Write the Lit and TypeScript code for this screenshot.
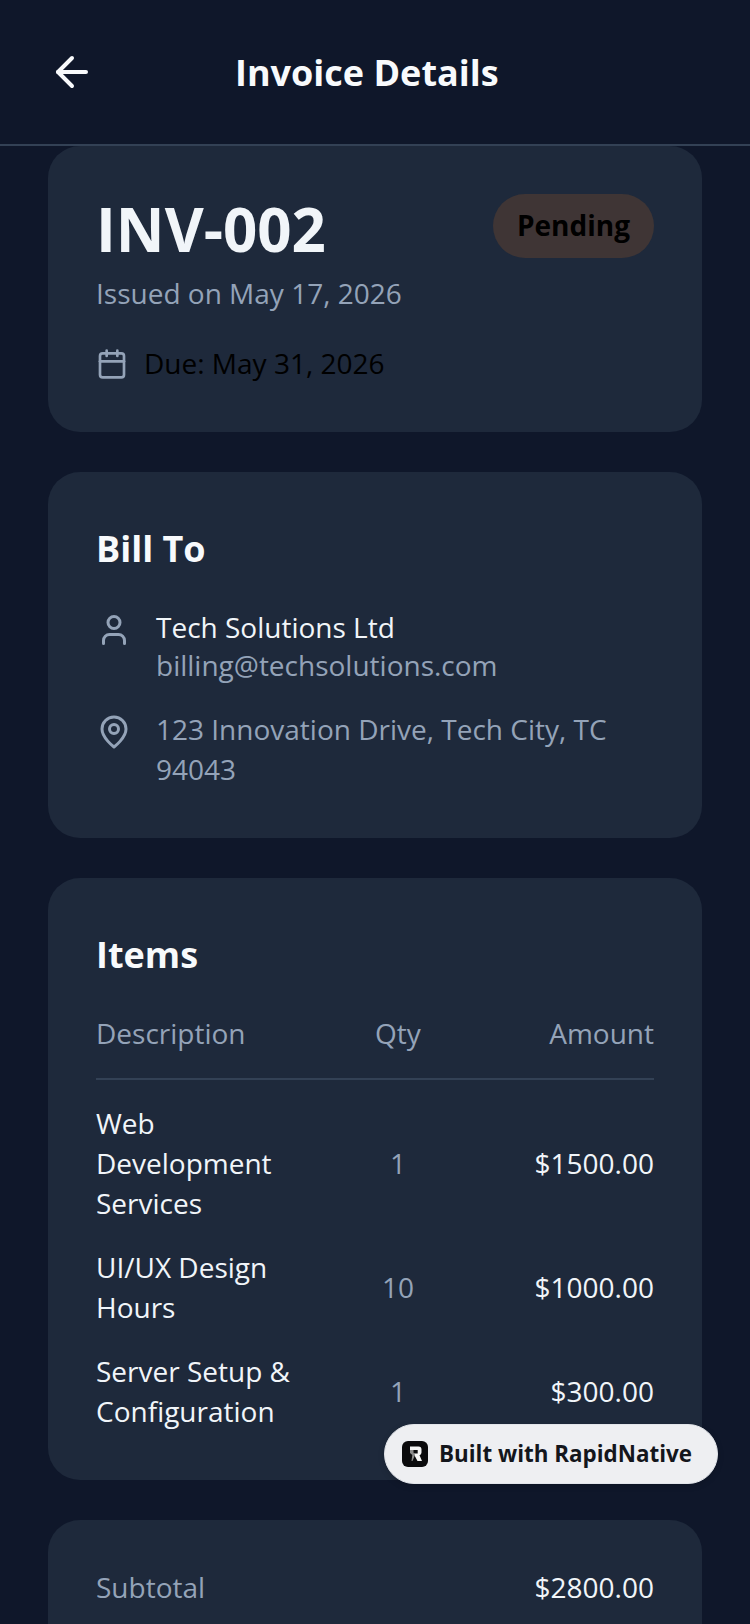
import { LitElement, html, css } from "lit";
import { customElement } from "lit/decorators.js";

@customElement("app-root")
export class AppRoot extends LitElement {
  static styles = css`
    :host { display: block; width: 750px; height: 1624px; overflow: hidden; position: relative; background: #0f172a; font-family: "Open Sans", sans-serif; color: #f1f5f9; }
    .header { height: 146px; box-sizing: border-box; border-bottom: 2px solid #334155; display: flex; align-items: center; padding: 0 48px; }
    .back { width: 48px; height: 48px; display: block; }
    .head-title { font-size: 36px; font-weight: 700; line-height: 48px; margin-left: 139px; margin-top: 2px; color: #f8fafc; }
    .content { display: flex; flex-direction: column; gap: 40px; padding: 0 48px; }
    .card { background: #1e293b; border-radius: 32px; padding: 48px 48px 49px; }
    .card.total { padding-top: 47px; }
    .top { display: flex; justify-content: space-between; align-items: flex-start; }
    .inv { font-size: 60px; font-weight: 700; line-height: 70px; color: #f1f5f9; }
    .badge { background: #3f3535; color: #000; font-size: 28px; font-weight: 700; height: 64px; line-height: 62px; padding: 0 24px; border-radius: 32px; margin-left: -1px; }
    .muted { color: #94a3b8; }
    .issued { font-size: 28px; line-height: 40px; margin-top: 9px; }
    .due { display: flex; align-items: center; gap: 16px; margin-top: 30px; font-size: 28px; line-height: 40px; color: #000; }
    .ic { width: 32px; height: 32px; display: block; flex: none; color: #94a3b8; }
    .due .ic { margin-top: 1px; }
    h2 { margin: 0; font-size: 36px; line-height: 58px; font-weight: 700; color: #f8fafc; }
    .row { display: flex; gap: 24px; font-size: 28px; line-height: 40px; }
    .row .ic { width: 36px; height: 36px; margin-top: 5px; }
    .row1 { margin-top: 29px; }
    .row2 { margin-top: 26px; }
    .name { color: #f1f5f9; }
    .email { line-height: 36px; }
    .table { margin-top: 29px; }
    .tr { display: grid; grid-template-columns: 220px 164px 1fr; align-items: center; font-size: 28px; line-height: 40px; }
    .tr.h { padding-bottom: 25px; border-bottom: 2px solid #334155; color: #94a3b8; margin-bottom: 23px; }
    .tr.b { margin-top: 24px; }
    .tr.b.first { margin-top: 0; }
    .tr > :nth-child(2) { text-align: center; color: #94a3b8; }
    .tr > :nth-child(3) { text-align: right; }
    .sub { display: flex; justify-content: space-between; font-size: 28px; line-height: 40px; }
    .pill { position: absolute; left: 384px; top: 1424px; width: 334px; height: 60px; box-sizing: border-box; background: #eeeff2; border-radius: 30px; border: 1px solid #e2e5ea; display: flex; align-items: center; gap: 11px; padding-left: 17px; font-size: 22.4px; font-weight: 700; color: #14161c; box-shadow: 0 2px 6px rgba(0,0,0,.15); }
    .pill span { margin-bottom: 2px; }
    .logo { width: 26px; height: 26px; display: block; flex: none; }
  `;

  render() {
    return html`
      <div class="header">
        <svg class="back" viewBox="0 0 24 24" fill="none" stroke="#f8fafc" stroke-width="2" stroke-linecap="round" stroke-linejoin="round"><path d="M19 12H5"/><path d="M12 19l-7-7 7-7"/></svg>
        <div class="head-title">Invoice Details</div>
      </div>
      <div class="content">
        <div class="card">
          <div class="top">
            <div class="inv">INV-002</div>
            <div class="badge">Pending</div>
          </div>
          <div class="issued muted">Issued on May 17, 2026</div>
          <div class="due">
            <svg class="ic" viewBox="0 0 24 24" fill="none" stroke="currentColor" stroke-width="2" stroke-linecap="round" stroke-linejoin="round"><path d="M8 2v4"/><path d="M16 2v4"/><rect x="3" y="4" width="18" height="18" rx="2"/><path d="M3 10h18"/></svg>
            <span>Due: May 31, 2026</span>
          </div>
        </div>
        <div class="card">
          <h2>Bill To</h2>
          <div class="row row1">
            <svg class="ic" viewBox="0 0 24 24" fill="none" stroke="currentColor" stroke-width="2" stroke-linecap="round" stroke-linejoin="round"><path d="M19 21v-2a4 4 0 0 0-4-4H9a4 4 0 0 0-4 4v2"/><circle cx="12" cy="7" r="4"/></svg>
            <div><div class="name">Tech Solutions Ltd</div><div class="muted email">billing@techsolutions.com</div></div>
          </div>
          <div class="row row2">
            <svg class="ic" viewBox="0 0 24 24" fill="none" stroke="currentColor" stroke-width="2" stroke-linecap="round" stroke-linejoin="round"><path d="M20 10c0 6-8 12-8 12s-8-6-8-12a8 8 0 0 1 16 0Z"/><circle cx="12" cy="10" r="3"/></svg>
            <div class="muted">123 Innovation Drive, Tech City, TC 94043</div>
          </div>
        </div>
        <div class="card">
          <h2>Items</h2>
          <div class="table">
            <div class="tr h"><div>Description</div><div>Qty</div><div>Amount</div></div>
            <div class="tr b first"><div>Web Development Services</div><div>1</div><div>$1500.00</div></div>
            <div class="tr b"><div>UI/UX Design Hours</div><div>10</div><div>$1000.00</div></div>
            <div class="tr b"><div>Server Setup &amp; Configuration</div><div>1</div><div>$300.00</div></div>
          </div>
        </div>
        <div class="card total">
          <div class="sub"><span class="muted">Subtotal</span><span>$2800.00</span></div>
        </div>
      </div>
      <div class="pill">
        <svg class="logo" viewBox="0 0 26 26"><rect width="26" height="26" rx="6" fill="#0b0b0d"/><path d="M8 5.5h8.5a3 3 0 0 1 3 3v3a3 3 0 0 1-2 2.8l2.5 5.7h-4.5l-4-7.5h4.2v-3.5H8z" fill="#f6f6f6"/><path d="M8 9h3.5v2.5L13 14l-2.5 6H9.5l.8-6L8 12z" fill="#8c8c8c"/></svg>
        <span>Built with RapidNative</span>
      </div>
    `;
  }
}
